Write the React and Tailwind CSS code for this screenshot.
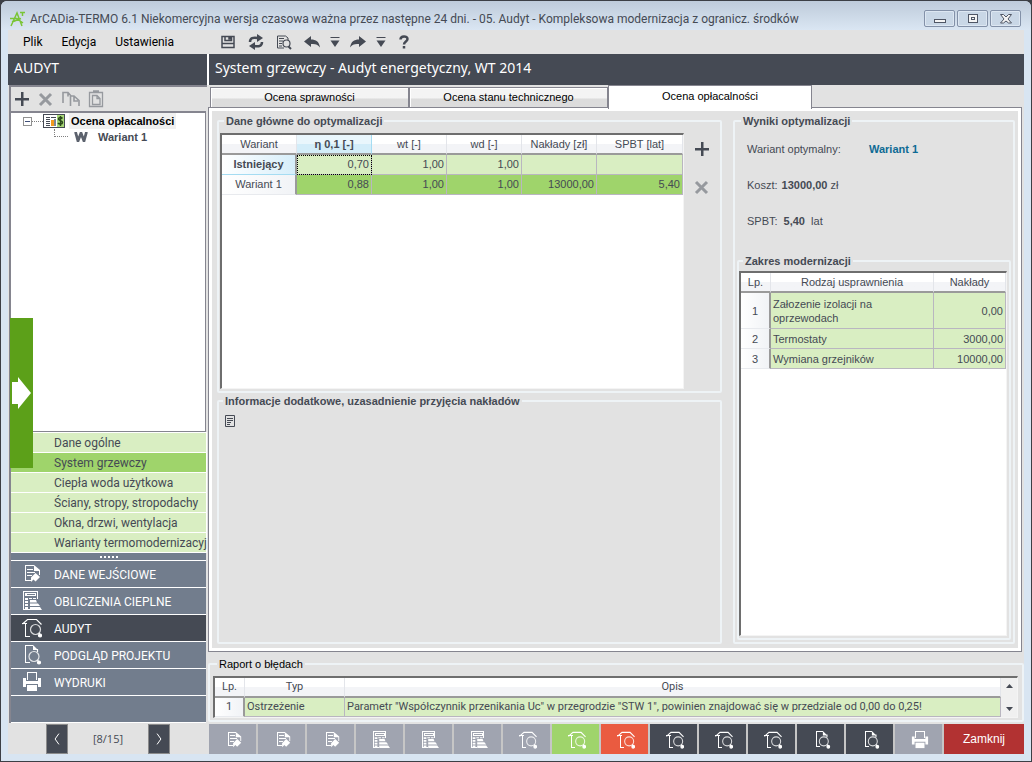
import clsx from 'clsx';

const ICON_PATHS = {
  edit: (
    <>
      <path d="M3 1.5h9M3.5 1v16M3 16.5h6" shapeRendering="crispEdges" />
      <path d="M5 5.5h6M5 8.5h8M5 11.5h5" shapeRendering="crispEdges" />
      <path d="M12 1l6 5v5h-1V7h-5z" fill="currentColor" stroke="none" />
      <path d="M13.500 9l4.500 4-4.500 4.500-2-2-2.500 2.500v-4.500z" fill="currentColor" stroke="none" />
    </>
  ),
  calc: (
    <>
      <path d="M1.5 0v19M1 .5h15M15.5 0v8M1 18.5h7" shapeRendering="crispEdges" />
      <path d="M4 2.500h9.500v2H4z" shapeRendering="crispEdges" />
      <path d="M3 7h3v2H3zM7 7h3v1H7zM11 7h3v1h-3zM3 10h3v2H3zM3 13h3v2H3zM3 16h3v2H3z" fill="currentColor" stroke="none" />
      <path d="M8 9h6l1 2.500H8zM8 12.500h8l2 2.500H8zM8 16h10l2 3H8z" fill="currentColor" stroke="none" />
    </>
  ),
  audit: (
    <>
      <path d="M.5 6l5-4.500h9l5 5" />
      <path d="M0 5.500h5M3.500 5v13M3 18.500h5" shapeRendering="crispEdges" />
      <circle cx="13.500" cy="11.500" r="5" opacity=".8" />
      <path d="M17 15l1.500 2" />
      <circle cx="18" cy="17.500" r="1.500" fill="currentColor" />
    </>
  ),
  preview: (
    <>
      <path d="M3 .5h8M3.5 0v18M3 17.5h5" shapeRendering="crispEdges" />
      <path d="M11 0l5 5h-5z" fill="currentColor" stroke="none" />
      <path d="M15.500 4v3" />
      <circle cx="12" cy="11.500" r="5" opacity=".8" />
      <path d="M15.500 15l1.500 2" />
      <circle cx="17" cy="17.500" r="1.500" fill="currentColor" />
    </>
  ),
  print: (
    <>
      <path d="M5.5 8V.5h9V8" shapeRendering="crispEdges" />
      <path d="M1 6h3v3h12V6h3v9h-3v-3H4v3H1z" fill="currentColor" stroke="none" />
      <path d="M5 13h10v6H5z" fill="currentColor" stroke="none" />
    </>
  ),
};

function Icon({ name, className }) {
  return (
    <svg viewBox="0 0 20 20" className={className} fill="none" stroke="currentColor" strokeWidth="1.2" aria-hidden="true">
      {ICON_PATHS[name]}
    </svg>
  );
}

function Plus() {
  return (
    <svg viewBox="0 0 16 16" className="size-4" aria-hidden="true">
      <path d="M7 1h2.500v6H15v2.500H9.500V15H7V9.500H1V7h6z" fill="#454a54" />
    </svg>
  );
}

function Cross() {
  return (
    <svg viewBox="0 0 16 16" className="size-4" aria-hidden="true">
      <path d="M2 3l11 11M13 3L2 14" stroke="#96999e" strokeWidth="3" />
    </svg>
  );
}

/* ---------- window title and menu ---------- */

function WindowButton({ label, children }) {
  return (
    <button
      type="button"
      aria-label={label}
      className="flex h-[17px] w-[31px] items-center justify-center rounded-xs border border-[#8391a8] bg-[#c9d7e6] shadow-[inset_0_0_0_1px_#dde7f2]"
    >
      <svg viewBox="0 0 14 12" className="h-3 w-3.5" fill="#f4f4f4" stroke="#4f5665" aria-hidden="true">
        {children}
      </svg>
    </button>
  );
}

function TitleBar() {
  return (
    <header className="flex h-[29px] shrink-0 items-center bg-gradient-to-b from-[#becbda] to-[#dae6f3] pt-1.5 pr-2.5 pl-[9px]">
      <svg viewBox="0 0 16 16" className="size-4 shrink-0" fill="none" stroke="#7ac537" strokeWidth="1.500" aria-hidden="true">
        <path d="M1 15L7 2l5 13M0 7.500h7l6 4.500M2 11l9-3.500M10 1.500h5M12.500 1.500V5" />
      </svg>
      <h1 className="ml-1 flex-1 font-[Roboto,'Open_Sans',sans-serif] text-[12px] whitespace-nowrap text-[#454a54]">
        ArCADia-TERMO 6.1 Niekomercyjna wersja czasowa ważna przez następne 24 dni. - 05. Audyt - Kompleksowa modernizacja z ogranicz. środków
      </h1>
      <div className="flex gap-0.5">
        <WindowButton label="Minimalizuj">
          <rect x="1.500" y="6.500" width="11" height="3" />
        </WindowButton>
        <WindowButton label="Maksymalizuj">
          <rect x="2.500" y="1.500" width="9" height="8" />
          <rect x="5.500" y="4.500" width="3" height="2" />
        </WindowButton>
        <WindowButton label="Zamknij okno">
          <path d="M1.500 1.500h3L7 4l2.500-2.500h3L9 6l3.500 4h-3L7 8l-2.500 2h-3L5 6z" />
        </WindowButton>
      </div>
    </header>
  );
}

const MENU = ['Plik', 'Edycja', 'Ustawienia'];

function ToolButton({ label, className, children }) {
  return (
    <button type="button" aria-label={label} className={clsx('flex h-5 w-4 items-center justify-center', className)}>
      <svg viewBox="0 0 16 16" className="size-4 shrink-0" fill="none" stroke="#454a54" strokeWidth="1.500" aria-hidden="true">
        {children}
      </svg>
    </button>
  );
}

function MenuBar() {
  return (
    <div className="flex h-6 shrink-0 items-center">
      <nav className="flex w-[212px] gap-[19px] pl-[15px] font-[Roboto,'Open_Sans',sans-serif] text-[12px] text-black">
        {MENU.map((item) => (
          <button key={item} type="button">{item}</button>
        ))}
      </nav>
      <div className="flex items-center">
        <ToolButton label="Zapisz" className="mr-3">
          <path d="M2 2.500h12v11H2z" />
          <path d="M5 2v4.500h6.500V2M2 9.500h12" />
          <path d="M9 3.500h2V5H9z" fill="#454a54" />
        </ToolButton>
        <ToolButton label="Odśwież" className="mr-3">
          <path d="M2 8c0-4 3-5 8-4M14 8c0 4-3 5-8 4" strokeWidth="2.500" />
          <path d="M9 0l6 4-6 4zM7 8l-6 4 6 4z" fill="#454a54" stroke="none" />
        </ToolButton>
        <ToolButton label="Podgląd" className="mr-3">
          <path d="M12 6V4L9.500 2H1.500v12H8" strokeWidth="1" />
          <path d="M3 4.500h5M3 7h4M3 9.500h3M3 12h3" strokeWidth="1" />
          <circle cx="10.500" cy="9.500" r="3.500" strokeWidth="1.200" />
          <path d="M12.500 12.500l2.500 2.500" strokeWidth="2" />
        </ToolButton>
        <ToolButton label="Cofnij" className="mr-[7px]">
          <path d="M7 2v3.500c5 0 8 2 9 8-2-3-5-4-9-3.500V13L0 7.500z" fill="#454a54" stroke="none" />
        </ToolButton>
        <ToolButton label="Lista cofania" className="mr-[7px]">
          <path d="M3.500 3.500h9" strokeWidth="1" />
          <path d="M3.500 6.500h9L8 13z" fill="#454a54" stroke="none" />
        </ToolButton>
        <ToolButton label="Ponów" className="mr-[7px]">
          <path d="M9 2v3.500c-5 0-8 2-9 8 2-3 5-4 9-3.500V13l7-5.500z" fill="#454a54" stroke="none" />
        </ToolButton>
        <ToolButton label="Lista ponawiania" className="mr-[7px]">
          <path d="M3.500 3.500h9" strokeWidth="1" />
          <path d="M3.500 6.500h9L8 13z" fill="#454a54" stroke="none" />
        </ToolButton>
        <ToolButton label="Pomoc">
          <path d="M4.500 5.500C4.500 1.500 11.500 1.500 11.500 5c0 2.500-3.500 2.500-3.500 5.500M8 12v2.500" strokeWidth="2.500" />
        </ToolButton>
      </div>
    </div>
  );
}

/* ---------- sidebar ---------- */

const PAGES = [
  { label: 'Dane ogólne' },
  { label: 'System grzewczy', active: true },
  { label: 'Ciepła woda użytkowa' },
  { label: 'Ściany, stropy, stropodachy' },
  { label: 'Okna, drzwi, wentylacja' },
  { label: 'Warianty termomodernizacyj' },
];

const SECTIONS = [
  { label: 'DANE WEJŚCIOWE', icon: 'edit' },
  { label: 'OBLICZENIA CIEPLNE', icon: 'calc' },
  { label: 'AUDYT', icon: 'audit', active: true },
  { label: 'PODGLĄD PROJEKTU', icon: 'preview' },
  { label: 'WYDRUKI', icon: 'print' },
];

function VariantTree() {
  return (
    <div className="mr-px min-h-[160px] flex-1 border-t-2 border-r border-b border-[#85858f] bg-white text-[11px] font-bold">
      <div className="flex h-4 items-center pl-3">
        <button type="button" aria-label="Zwiń" className="flex size-[9px] items-center justify-center border border-[#919191] bg-white">
          <span className="h-px w-[5px] bg-[#40507a]" />
        </button>
        <span className="w-[11px] border-t border-dotted border-[#808080]" />
        <svg viewBox="0 0 22 14" className="h-3.5 w-[22px]" aria-hidden="true">
          <rect x=".5" y=".5" width="21" height="13" fill="#fff" stroke="#454a54" />
          <rect x="14" y="1" width="7" height="12" fill="#a8d878" />
          <path d="M3 3.500h4M3 5.500h4M3 7.500h4M3 9.500h4M3 11.500h4M8 3.500h5" stroke="#454a54" />
          <path d="M8 6h3v6H8z" fill="#f39a1f" />
          <path d="M11 5h2v7h-2z" fill="#7c8795" />
          <path d="M19.500 4.500c-1-1.500-4-1.500-4 .5s4 1.500 4 3.500-3.500 2-4.500.5M17.500 2v10" stroke="#2c4a1c" strokeWidth="1.500" fill="none" />
        </svg>
        <span className="ml-1 bg-[#f0f0f0] px-0.5 text-black">Ocena opłacalności</span>
      </div>
      <div className="flex h-4 items-center pl-[43px]">
        <span className="mb-2 h-2 w-[14px] border-b border-l border-dotted border-[#808080]" />
        <svg viewBox="0 0 14 10" className="ml-1.5 h-2.5 w-3.5" fill="none" stroke="#5c626d" strokeWidth="2.800" aria-hidden="true">
          <path d="M1.500 0l2.500 9L7 1l3 8 2.500-9" />
        </svg>
        <span className="ml-2.5 text-[#454a54]">Wariant 1</span>
      </div>
    </div>
  );
}

function PagerButton({ label, path }) {
  return (
    <button
      type="button"
      aria-label={label}
      className="flex h-[30px] w-[22px] items-center justify-center border border-[#8b8b8b] bg-[#454a54]"
    >
      <svg viewBox="0 0 13 18" className="h-3.5 w-2.5" fill="none" stroke="#fff" strokeWidth="1.300" aria-hidden="true">
        <path d={path} />
      </svg>
    </button>
  );
}

function Sidebar() {
  return (
    <aside className="flex w-[201px] shrink-0 flex-col">
      <h2 className="h-[31px] shrink-0 border-r-2 border-white bg-[#454a54] px-1.5 font-['Noto_Sans','Open_Sans',sans-serif] text-[14px] leading-7 text-white">
        AUDYT
      </h2>
      <div className="relative mr-0.5 ml-px flex flex-1 flex-col border-t-2 border-l-2 border-[#85858f]">
        <div className="flex h-6 shrink-0 items-center gap-2 pl-[3px]">
          <button type="button" aria-label="Dodaj"><Plus /></button>
          <button type="button" aria-label="Usuń"><Cross /></button>
          <button type="button" aria-label="Kopiuj">
            <svg viewBox="0 0 18 16" className="h-4 w-[18px]" fill="none" stroke="#96999e" strokeWidth="1.600" aria-hidden="true">
              <path d="M1 12V1.500h5l3.500 4M8.500 15V5H12l5 4.500V15M6 1.500v4M12 5v5h4" />
            </svg>
          </button>
          <button type="button" aria-label="Wklej">
            <svg viewBox="0 0 16 18" className="h-[18px] w-4" fill="none" stroke="#96999e" strokeWidth="1.300" aria-hidden="true">
              <path d="M1.500 2.500h13v14h-13zM5 1h6" />
              <path d="M4.500 5.500H9l3 3v6H4.500zM9 5.500v3h3" />
            </svg>
          </button>
        </div>
        <VariantTree />
        <ul className="shrink-0 border-t border-white bg-white pr-px font-[Roboto,'Noto_Sans',sans-serif] text-[12px] text-[#454a54]">
          {PAGES.map(({ label, active }) => (
            <li key={label} className="border-b border-white">
              <button
                type="button"
                className={clsx(
                  'block h-[19px] w-full pl-[43px] text-left leading-5 whitespace-nowrap',
                  active ? 'bg-[#9fd46b]' : 'bg-[#d9eec2]'
                )}
              >
                {label}
              </button>
            </li>
          ))}
        </ul>
        <div className="mr-px flex h-[7px] shrink-0 items-center justify-center gap-0.5 bg-[#727d8d]">
          {[1, 2, 3, 4, 5].map((dot) => (
            <span key={dot} className="size-0.5 bg-white" />
          ))}
        </div>
        <ul className="mr-px shrink-0 bg-[#727d8d] font-[Roboto,'Noto_Sans',sans-serif] text-[12px] text-white">
          {SECTIONS.map(({ label, icon, active }) => (
            <li key={label} className="border-t border-white">
              <button
                type="button"
                className={clsx('flex h-[26px] w-full items-center pl-[11px] text-left', active && 'bg-[#454a54]')}
              >
                <Icon name={icon} className="size-5" />
                <span className="ml-3 pt-0.5">{label}</span>
              </button>
            </li>
          ))}
          <li className="h-7 border-y border-white" />
        </ul>
        <button
          type="button"
          aria-label="Rozwiń panel"
          className="absolute bottom-[255px] -left-px flex h-[150px] w-[23px] items-center bg-[#5ca019]"
        >
          <svg viewBox="0 0 23 34" className="h-[34px] w-[23px]" aria-hidden="true">
            <path d="M2 6h6V1l13 16L8 33v-5H2z" fill="#fff" />
          </svg>
        </button>
      </div>
      <div className="mt-px flex h-[30px] shrink-0 items-center pl-[38px] font-['Open_Sans','Noto_Sans',sans-serif] text-[11px] text-[#454a54]">
        <PagerButton label="Poprzednia" path="M9 2L4 9l5 7" />
        <span className="w-20 text-center">[8/15]</span>
        <PagerButton label="Następna" path="M4 2l5 7-5 7" />
      </div>
    </aside>
  );
}

/* ---------- main panel ---------- */

function Group({ title, plain, className, children }) {
  return (
    <fieldset className={clsx('min-w-0 rounded-xs border-2 border-[#eef3f6]', className)}>
      <legend
        className={clsx(
          'ml-1 px-0.5 text-[11px] leading-4',
          plain ? 'text-black' : 'font-bold text-[#454a54]'
        )}
      >
        {title}
      </legend>
      {children}
    </fieldset>
  );
}

const HEAD = 'border-r border-b-2 border-r-[#e3e5ea] border-b-[#9a9a9a] bg-gradient-to-b from-white from-50% to-[#f3f4f7] to-50% p-0 font-normal';
const ROW_HEAD = 'border-r-2 border-b border-r-[#9a9a9a] border-b-[#e8eaee] bg-gradient-to-r from-white to-[#f1f3f6] p-0 text-center font-normal';
const CELL = 'border-r border-b border-[#b9b6c0] px-0.5 py-0';

const VARIANT_COLS = ['η 0,1 [-]', 'wt [-]', 'wd [-]', 'Nakłady [zł]', 'SPBT [lat]'];
const VARIANTS = [
  { name: 'Istniejący', values: ['0,70', '1,00', '1,00', '', ''], current: true },
  { name: 'Wariant 1', values: ['0,88', '1,00', '1,00', '13000,00', '5,40'] },
];

function VariantsTable() {
  return (
    <table className="w-full table-fixed border-separate border-spacing-0 text-[11px]">
      <colgroup>
        <col span={5} className="w-[75px]" />
        <col />
      </colgroup>
      <thead>
        <tr className="h-5">
          <th scope="col" className={HEAD}>Wariant</th>
          {VARIANT_COLS.map((col, i) => (
            <th
              key={col}
              scope="col"
              className={
                i === 0
                  ? 'border-r border-b-2 border-r-[#a5dcf2] border-b-[#9a9a9a] bg-gradient-to-b from-[#e9f6fc] from-50% to-[#d3edf9] to-50% p-0 font-bold'
                  : HEAD
              }
            >
              {col}
            </th>
          ))}
        </tr>
      </thead>
      <tbody>
        {VARIANTS.map(({ name, values, current }) => (
          <tr key={name} className={clsx('h-5 text-right', current ? 'bg-[#d9eec2]' : 'bg-[#9fd46b]')}>
            <th
              scope="row"
              className={
                current
                  ? 'border-r-2 border-b border-r-[#9a9a9a] border-b-[#a5dcf2] bg-gradient-to-r from-white to-[#d6eefa] p-0 text-center font-bold'
                  : ROW_HEAD
              }
            >
              {name}
            </th>
            {values.map((value, i) => (
              <td key={i} className={clsx(CELL, current && i === 0 && 'outline outline-dotted -outline-offset-1 outline-black')}>
                {value}
              </td>
            ))}
          </tr>
        ))}
      </tbody>
    </table>
  );
}

const IMPROVEMENTS = [
  ['Załozenie izolacji na oprzewodach', '0,00'],
  ['Termostaty', '3000,00'],
  ['Wymiana grzejników', '10000,00'],
];

function ImprovementsTable() {
  return (
    <table className="w-full table-fixed border-separate border-spacing-0 text-[11px] leading-[14px]">
      <colgroup>
        <col className="w-[30px]" />
        <col />
        <col className="w-[72px]" />
      </colgroup>
      <thead>
        <tr className="h-5">
          {['Lp.', 'Rodzaj usprawnienia', 'Nakłady'].map((col) => (
            <th key={col} scope="col" className={HEAD}>{col}</th>
          ))}
        </tr>
      </thead>
      <tbody>
        {IMPROVEMENTS.map(([name, cost], i) => (
          <tr key={name} className={clsx('bg-[#d9eec2]', i === 0 ? 'h-9' : 'h-5')}>
            <th scope="row" className={ROW_HEAD}>{i + 1}</th>
            <td className={clsx(CELL, i === 0 && 'pr-10')}>{name}</td>
            <td className={clsx(CELL, 'text-right')}>{cost}</td>
          </tr>
        ))}
      </tbody>
    </table>
  );
}

const TABS = ['Ocena sprawności', 'Ocena stanu technicznego'];

function Tabs() {
  return (
    <div role="tablist" className="flex h-[22px] shrink-0 items-end pl-px text-[11px] text-black">
      {TABS.map((tab) => (
        <button
          key={tab}
          type="button"
          role="tab"
          aria-selected="false"
          className="h-5 w-[199px] border border-b-0 border-[#85858f] bg-gradient-to-b from-[#f4f4f4] from-50% to-[#dcdcdc] to-60% shadow-[inset_1px_1px_0_#fff]"
        >
          {tab}
        </button>
      ))}
      <button
        type="button"
        role="tab"
        aria-selected="true"
        className="z-10 -mb-0.5 h-6 w-[204px] border border-b-0 border-[#85858f] bg-white pb-0.5"
      >
        Ocena opłacalności
      </button>
    </div>
  );
}

function Results() {
  return (
    <Group title="Wyniki optymalizacji" className="flex w-[282px] shrink-0 flex-col px-0.5 pb-0.5">
      <dl className="flex flex-col gap-5 pt-3 pb-6 pl-2.5 text-[11px] leading-4">
        <div className="flex">
          <dt className="w-[122px]">Wariant optymalny:</dt>
          <dd className="font-bold text-[#0e6a94]">Wariant 1</dd>
        </div>
        <div className="flex gap-1">
          <dt>Koszt:</dt>
          <dd><b>13000,00</b> zł</dd>
        </div>
        <div className="flex gap-1.5">
          <dt>SPBT:</dt>
          <dd><b>5,40</b>&nbsp; lat</dd>
        </div>
      </dl>
      <Group title="Zakres modernizacji" className="flex flex-1 flex-col pt-0.5 pr-0.5 pb-0.5">
        <div className="flex-1 border border-t-2 border-l-2 border-[#f4f4f4] border-t-[#6e6e6e] border-l-[#6e6e6e] bg-white">
          <ImprovementsTable />
        </div>
      </Group>
    </Group>
  );
}

function Workspace() {
  return (
    <div className="mr-0.5 -ml-px flex flex-1 gap-[11px] border border-[#85858f] bg-[#e2e2e2] px-1.5 pt-[5px] pb-[7px] shadow-[inset_0_0_0_3px_#fff]">
      <div className="flex min-w-0 flex-1 flex-col pl-0.5">
        <Group title="Dane główne do optymalizacji" className="flex pt-1 pb-0.5 pl-px">
          <div className="min-h-[256px] flex-1 border border-t-2 border-l-2 border-[#f4f4f4] border-t-[#6e6e6e] border-l-[#6e6e6e] bg-white">
            <VariantsTable />
          </div>
          <div className="flex w-9 shrink-0 flex-col items-center gap-[22px] pt-2">
            <button type="button" aria-label="Dodaj wariant"><Plus /></button>
            <button type="button" aria-label="Usuń wariant"><Cross /></button>
          </div>
        </Group>
        <Group title="Informacje dodatkowe, uzasadnienie przyjęcia nakładów" className="flex-1 pb-2">
          <button type="button" aria-label="Edytuj opis" className="mt-1.5 ml-1.5 block">
            <svg viewBox="0 0 10 12" className="h-3 w-2.5" fill="none" stroke="#454a54" aria-hidden="true">
              <path d="M.5.5h9v11h-9zM2 3.500h6M2 5.500h6M2 7.500h4M2 9.500h3" />
            </svg>
          </button>
        </Group>
      </div>
      <Results />
    </div>
  );
}

function ErrorReport() {
  return (
    <Group title="Raport o błędach" plain className="mt-1 -ml-px flex shrink-0 pt-1 pr-1 pb-0.5 pl-[3px]">
      <div className="flex h-[42px] flex-1 overflow-hidden border border-t-2 border-l-2 border-[#f4f4f4] border-t-[#6e6e6e] border-l-[#6e6e6e] bg-white">
        <div className="min-w-0 flex-1">
          <table className="w-full table-fixed border-separate border-spacing-0 font-[Roboto,'Noto_Sans',sans-serif] text-[11px]">
            <colgroup>
              <col className="w-[30px]" />
              <col className="w-[100px]" />
              <col />
            </colgroup>
            <thead>
              <tr className="h-5">
                {['Lp.', 'Typ', 'Opis'].map((col) => (
                  <th key={col} scope="col" className={HEAD}>{col}</th>
                ))}
              </tr>
            </thead>
            <tbody>
              <tr className="h-[19px] bg-[#d9eec2]">
                <th scope="row" className={ROW_HEAD}>1</th>
                <td className={CELL}>Ostrzeżenie</td>
                <td className={clsx(CELL, 'whitespace-nowrap')}>
                  Parametr "Współczynnik przenikania Uc" w przegrodzie "STW 1", powinien znajdować się w przedziale od 0,00 do 0,25!
                </td>
              </tr>
            </tbody>
          </table>
        </div>
        <div className="flex w-4 shrink-0 flex-col items-center justify-between bg-[#f0f0f0] py-1.5">
          <button type="button" aria-label="W górę">
            <svg viewBox="0 0 7 4" className="h-1 w-[7px]" aria-hidden="true"><path d="M0 4l3.500-4L7 4z" fill="#454a54" /></svg>
          </button>
          <button type="button" aria-label="W dół">
            <svg viewBox="0 0 7 4" className="h-1 w-[7px]" aria-hidden="true"><path d="M0 0l3.500 4L7 0z" fill="#454a54" /></svg>
          </button>
        </div>
      </div>
    </Group>
  );
}

const STEPS = [
  { icon: 'edit', tone: 'bg-[#a0a4b0]' },
  { icon: 'edit', tone: 'bg-[#a0a4b0]' },
  { icon: 'edit', tone: 'bg-[#a0a4b0]' },
  { icon: 'calc', tone: 'bg-[#a0a4b0]' },
  { icon: 'calc', tone: 'bg-[#a0a4b0]' },
  { icon: 'calc', tone: 'bg-[#a0a4b0]' },
  { icon: 'audit', tone: 'bg-[#a0a4b0]' },
  { icon: 'audit', tone: 'bg-[#9fd46b]' },
  { icon: 'audit', tone: 'bg-[#ea5b40]' },
  { icon: 'audit', tone: 'bg-[#454a54]' },
  { icon: 'audit', tone: 'bg-[#454a54]' },
  { icon: 'audit', tone: 'bg-[#454a54]' },
  { icon: 'preview', tone: 'bg-[#454a54]' },
  { icon: 'preview', tone: 'bg-[#454a54]' },
  { icon: 'print', tone: 'bg-[#a0a4b0]' },
];

function StepBar() {
  return (
    <div className="mt-0.5 flex h-[30px] shrink-0">
      {STEPS.map(({ icon, tone }, i) => (
        <button
          key={i}
          type="button"
          aria-label={`Etap ${i + 1}`}
          className={clsx('flex w-[49px] items-center justify-center border-r-2 border-[#c6c6c6] pt-0.5 pl-0.5 text-white', tone)}
        >
          <Icon name={icon} className="size-[18px]" />
        </button>
      ))}
      <button type="button" className="flex-1 bg-[#b23232] text-[12px] text-white">Zamknij</button>
    </div>
  );
}

export default function App() {
  return (
    <div className="flex min-h-screen flex-col bg-[#3c3f45] p-px font-['Liberation_Sans',Arial,sans-serif] text-[#454a54]">
      <div className="flex flex-1 flex-col overflow-hidden rounded-t-md bg-[#d8e5f2]">
        <TitleBar />
        <div className="mx-[7px] mb-[7px] flex flex-1 flex-col bg-[#e2e2e2]">
          <MenuBar />
          <div className="flex flex-1">
            <Sidebar />
            <main className="flex min-w-0 flex-1 flex-col">
              <h2 className="h-[31px] shrink-0 bg-[#454a54] px-1.5 font-['Noto_Sans','Open_Sans',sans-serif] text-[14px] leading-7 text-white">
                System grzewczy - Audyt energetyczny, WT 2014
              </h2>
              <Tabs />
              <Workspace />
              <ErrorReport />
              <StepBar />
            </main>
          </div>
        </div>
      </div>
    </div>
  );
}
